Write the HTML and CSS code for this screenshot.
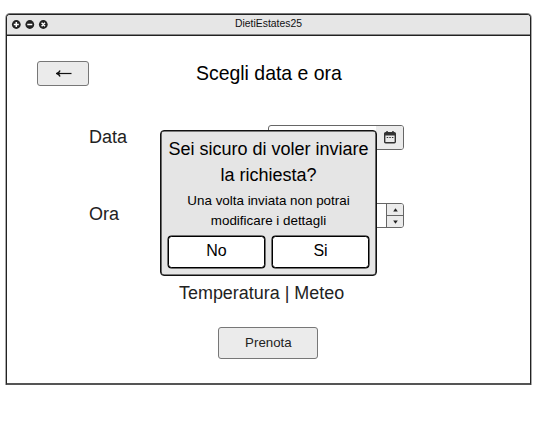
FILE: index.html
```html
<!DOCTYPE html>
<html lang="it">
<head>
<meta charset="utf-8">
<title>DietiEstates25</title>
<link rel="stylesheet" href="styles.css">
</head>
<body>
<main class="window">
  <header class="titlebar">
    <svg class="controls" width="38" height="10" viewBox="0 0 38 10">
      <g fill="#222"><circle cx="5.3" cy="4.5" r="4.4"/><circle cx="18.8" cy="4.5" r="4.4"/><circle cx="32.3" cy="4.5" r="4.4"/></g>
      <path d="M2.8 4.5h5M5.3 2v5M16.3 4.5h5M30.6 2.8l3.4 3.4M34 2.8l-3.4 3.4" stroke="#fff" stroke-width="1.5"/>
    </svg>
    <span class="title">DietiEstates25</span>
  </header>
  <div class="heading">
    <button class="back" aria-label="Indietro"><svg width="16" height="8" viewBox="0 0 16 8"><path d="M1 3.5H15.5" stroke="#111" stroke-width="1.2"/><path d="M4 .5Q3.3 2.8 .8 3.5Q3.3 4.2 4 6.5" fill="none" stroke="#111" stroke-width="1.4"/></svg></button>
    <h1>Scegli data e ora</h1>
  </div>
  <div class="row">
    <label>Data</label>
    <div class="field">
      <span class="date-button"><svg width="12" height="13" viewBox="0 0 12 13"><path d="M1.7 1.8h8.6q1 0 1 1v8q0 1-1 1H1.7q-1 0-1-1v-8q0-1 1-1z" fill="none" stroke="#333" stroke-width="1.4"/><path d="M.5 2h11v2.6H.5zM2.3 0h1.5v2H2.3zM8.2 0h1.5v2H8.2z" fill="#333"/><path d="M2.7 6.5h1.5M5.3 6.5h1.5M7.9 6.5h1.5" stroke="#333" stroke-width="1.1"/></svg></span>
    </div>
  </div>
  <div class="row row-time">
    <label>Ora</label>
    <div class="field">
      <span class="stepper">
        <span><svg width="5" height="4"><path d="M2.5 .3L4.8 3.5H.2z" fill="#222"/></svg></span>
        <span><svg width="5" height="4"><path d="M2.5 3.7L4.8 .5H.2z" fill="#222"/></svg></span>
      </span>
    </div>
  </div>
  <p class="weather">Temperatura | Meteo</p>
  <button class="submit">Prenota</button>
  <section class="dialog">
    <h2>Sei sicuro di voler inviare<br>la richiesta?</h2>
    <p>Una volta inviata non potrai<br>modificare i dettagli</p>
    <div class="actions"><button>No</button><button>Si</button></div>
  </section>
</main>
</body>
</html>
```
FILE: styles.css
```css
* { box-sizing: border-box; }
body { margin: 0; padding: 14px 0 0 6px; background: #fff; font-family: "Liberation Sans", Arial, sans-serif; }
h1, h2, p { margin: 0; font-weight: 400; }
button { font-family: inherit; padding: 0; }
.window { position: relative; width: 525px; height: 371px; border: 1px solid #222; border-bottom: 2px solid #555; border-radius: 4px 4px 0 0; box-shadow: 0 -1px #777, -1px 0 #aaa, 1px 0 #aaa; display: flex; flex-direction: column; }
.titlebar { height: 21px; flex: none; display: grid; grid-template-columns: 48px 1fr 48px; align-items: center; background: #e6e6e6; border-bottom: 1px solid #222; box-shadow: inset 0 -1px #888; border-radius: 3px 3px 0 0; }
.controls { margin-left: 4px; }
.title { text-align: center; font-size: 10.4px; line-height: 12px; color: #111; margin-top: -2px; }
.heading { display: flex; height: 25px; margin: 25px 0 0 30px; align-items: center; }
.back { width: 52px; height: 25px; display: flex; align-items: center; justify-content: center; padding-left: 1px; background: #ebebeb; border: 1px solid #777; border-radius: 3px; }
h1 { font-size: 19.45px; line-height: 24px; margin: -2px 0 0 107px; color: #000; white-space: nowrap; }
.row { display: flex; align-items: center; height: 25px; margin: 39px 0 0 82px; }
.row-time { margin-top: 53px; }
label { width: 179px; font-size: 18px; line-height: 22px; margin-top: -2px; color: #222; }
.row-time label { margin-top: -4px; }
.field { width: 136px; height: 25px; border: 1px solid #666; border-radius: 3px; display: flex; justify-content: flex-end; overflow: hidden; background: #fff; }
.date-button { width: 27px; display: flex; align-items: center; justify-content: center; background: #ebebeb; }
.stepper { width: 17px; display: flex; flex-direction: column; border-left: 1px solid #666; background: #ebebeb; }
.stepper span { flex: 1; display: flex; align-items: center; justify-content: center; }
.stepper span + span { border-top: 1px solid #666; }
.weather { margin: 54px 0 0 172px; font-size: 17.95px; line-height: 22px; color: #222; }
.submit { width: 100px; height: 32px; margin: 23px 0 0 211.4px; font-size: 13.3px; padding-bottom: 2px; color: #222; background: #ebebeb; border: 1px solid #777; border-radius: 3px; }
.dialog { position: absolute; left: 153px; top: 115px; width: 217px; height: 146px; border: 1px solid #111; box-shadow: inset 0 0 0 0.6px #111; border-radius: 4px; background: #e5e5e5; padding: 5px 6px; text-align: center; color: #000; }
.dialog h2 { font-size: 18px; line-height: 26px; white-space: nowrap; }
.dialog p { font-size: 13.4px; line-height: 20px; margin-top: 3px; }
.actions { display: grid; grid-template-columns: 97px 97px; justify-content: center; gap: 7px; margin-top: 5px; }
.actions button { height: 32px; background: #fff; border: 1px solid #000; box-shadow: 0 0 0 0.5px #000; border-radius: 3.5px; font-size: 16px; line-height: 20px; padding-bottom: 3px; color: #000; }
```
